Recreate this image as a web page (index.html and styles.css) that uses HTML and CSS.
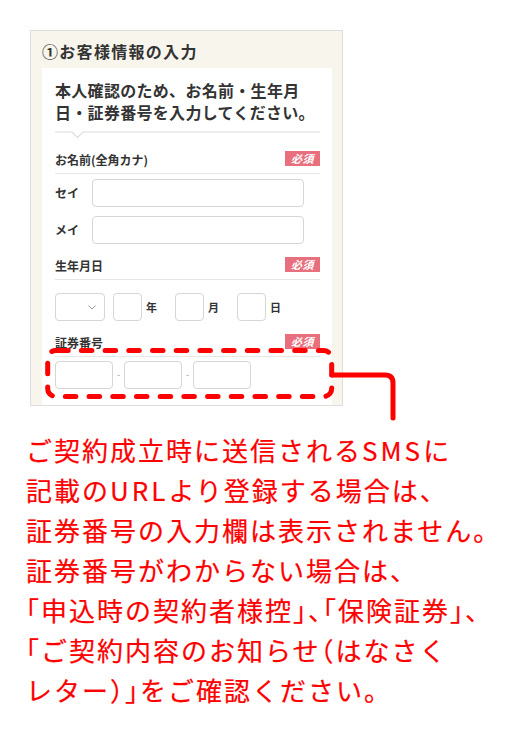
FILE: index.html
```html
<!DOCTYPE html>
<html lang="ja">
<head>
<meta charset="utf-8">
<title>お客様情報の入力</title>
<link rel="stylesheet" href="styles.css">
</head>
<body>
<div class="page">
  <section class="panel">
    <h2 class="panel-title">①お客様情報の入力</h2>
    <div class="card">
      <p class="intro">本人確認のため、お名前・生年月<br>日・証券番号を入力してください。</p>
      <svg class="divider" width="265" height="8" viewBox="0 0 265 8"><polyline points="0,1 17,1 22.5,6.5 28,1 265,1" fill="none" stroke="#dcdcdc" stroke-width="1.2"/></svg>

      <div class="field-head first"><span class="label">お名前(全角カナ)</span><span class="badge">必須</span></div>
      <div class="name-rows">
        <div class="name-row"><span class="name-label">セイ</span><span class="box name-box"></span></div>
        <div class="name-row"><span class="name-label">メイ</span><span class="box name-box"></span></div>
      </div>

      <div class="field-head"><span class="label">生年月日</span><span class="badge">必須</span></div>
      <div class="date-row">
        <span class="box select-box"><svg class="chev" width="8" height="5" viewBox="0 0 8 5"><polyline points="0.5,0.5 4,4 7.5,0.5" fill="none" stroke="#9a9a9a" stroke-width="1"/></svg></span>
        <span class="box small-box"></span><span class="unit">年</span>
        <span class="box small-box"></span><span class="unit">月</span>
        <span class="box small-box"></span><span class="unit">日</span>
      </div>

      <div class="field-head"><span class="label">証券番号</span><span class="badge">必須</span></div>
      <div class="code-row">
        <span class="box code-box"></span><span class="sep">-</span>
        <span class="box code-box"></span><span class="sep">-</span>
        <span class="box code-box"></span>
      </div>
    </div>
  </section>

  <p class="note">ご契約成立時に送信される<span class="latin">SMS</span>に<br>記載の<span class="latin">URL</span>より登録する場合は、<br>証券番号の入力欄は表示されません。<br>証券番号がわからない場合は、<br><span class="hw">「</span>申込時の契約者様控<span class="hw">」、「</span>保険証券<span class="hw">」、</span><br><span class="hw">「</span>ご契約内容のお知らせ<span class="hw">（</span>はなさく<br>レター<span class="hw">）」</span>をご確認ください。</p>

  <svg class="annot" width="506" height="740" viewBox="0 0 506 740">
    <rect x="47.7" y="350.5" width="284" height="46" rx="8" fill="none" stroke="#ff0000" stroke-width="5" stroke-dasharray="10.5 13.2" stroke-dashoffset="-2" stroke-linecap="round"/>
    <path d="M332 375 H385 Q393 375 393 383 V418" fill="none" stroke="#ff0000" stroke-width="5" stroke-linecap="round"/>
  </svg>
</div>
</body>
</html>
```

FILE: styles.css
```css
html, body {
  margin: 0;
  padding: 0;
  background: #ffffff;
}

body {
  font-family: "Noto Sans CJK JP", "Noto Sans", sans-serif;
  color: #333333;
}

.page {
  position: relative;
  width: 506px;
  height: 740px;
  padding: 30px 0 0 30px;
  box-sizing: border-box;
}

.panel {
  width: 313px;
  box-sizing: border-box;
  border: 1px solid #dddddd;
  background: #f8f5ec;
  padding: 10px 10px 0 11px;
}

.panel-title {
  margin: 0;
  font-size: 16px;
  line-height: 20px;
  font-weight: 700;
  letter-spacing: 1.3px;
  color: #333333;
}

.card {
  margin-top: 7px;
  background: #ffffff;
  padding: 11px 12px 16px 13px;
  display: flex;
  flex-direction: column;
}

.intro {
  margin: 0;
  font-size: 16px;
  line-height: 22px;
  font-weight: 700;
  letter-spacing: 0.3px;
  color: #333333;
}

.divider {
  display: block;
  margin-top: 8px;
}

.field-head {
  display: flex;
  justify-content: space-between;
  align-items: center;
  height: 15px;
  padding-bottom: 7px;
  border-bottom: 1px solid #e6e6e6;
  margin-top: 13px;
}

.field-head.first {
  margin-top: 12px;
}

.label {
  font-size: 12px;
  font-weight: 700;
  line-height: 15px;
  color: #333333;
  position: relative;
  top: 1px;
}

.badge {
  width: 35px;
  height: 15px;
  background: #e8707e;
  color: #ffffff;
  font-size: 11px;
  line-height: 15px;
  font-weight: 700;
  font-style: italic;
  text-align: center;
  letter-spacing: 0.5px;
}

.box {
  display: block;
  box-sizing: border-box;
  height: 28px;
  border: 1px solid #d6d6d6;
  border-radius: 4px;
  background: #ffffff;
}

.name-rows {
  margin-top: 5px;
  display: flex;
  flex-direction: column;
  gap: 9px;
}

.name-row {
  display: flex;
  align-items: center;
}

.name-label {
  width: 37px;
  font-size: 12px;
  font-weight: 700;
  line-height: 16px;
}

.name-box {
  width: 212px;
}

.date-row {
  margin-top: 13px;
  display: flex;
  align-items: center;
}

.select-box {
  width: 50px;
  margin-right: 8px;
  display: flex;
  align-items: center;
  justify-content: flex-end;
  padding-right: 8px;
}

.chev {
  display: block;
}

.small-box {
  width: 29px;
}

.unit {
  width: 33px;
  box-sizing: border-box;
  padding-left: 4px;
  font-size: 11px;
  font-weight: 700;
  line-height: 16px;
}

.code-row {
  margin-top: 4px;
  display: flex;
  align-items: center;
}

.code-box {
  width: 58px;
}

.sep {
  width: 11px;
  text-align: center;
  font-size: 9px;
  line-height: 12px;
  color: #9a9a9a;
}

.note {
  margin: 24px 0 0 -4px;
  font-size: 26px;
  line-height: 40px;
  font-weight: 400;
  letter-spacing: 2px;
  color: #ff0000;
  -webkit-text-stroke: 0.2px #ff0000;
  white-space: nowrap;
}

.note .hw {
  font-feature-settings: "halt";
}

.note .latin {
  letter-spacing: 3px;
}

.annot {
  position: absolute;
  left: 0;
  top: 0;
  pointer-events: none;
}
```
